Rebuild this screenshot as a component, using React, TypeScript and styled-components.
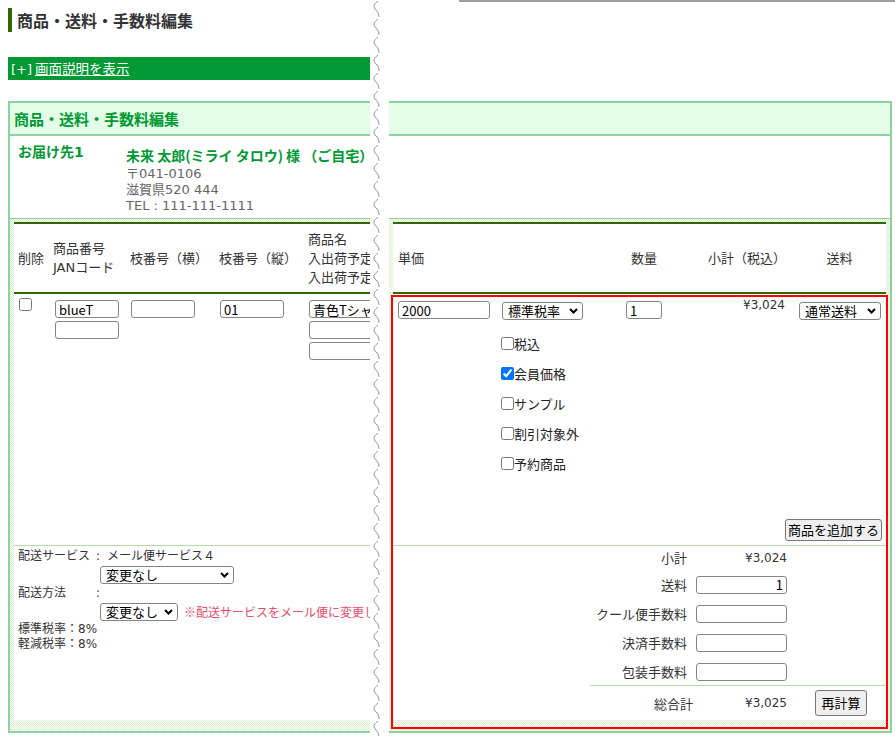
import { FC, ReactNode } from 'react';
import styled, { createGlobalStyle } from 'styled-components';

const GREEN = '#009933';
const DARK = '#336600';
const PANEL = '#8dd1a1';
const SOFT = '#b5dca5';
const HATCH = 'repeating-conic-gradient(#d6efc6 0% 25%, #ffffff 0% 50%) 0 0 / 2px 2px';
const UI_FONT = '"Noto Sans CJK JP", "Noto Sans", sans-serif';

const GlobalStyle = createGlobalStyle`
  html, body {
    margin: 0;
    padding: 0;
    background: #fff;
  }
  body {
    font-family: "DejaVu Sans", "Noto Sans CJK JP", sans-serif;
    font-size: 13px;
    color: #333;
  }
`;

const Page = styled.div`
  display: flex;
  width: 895px;
  height: 736px;
  overflow: hidden;
  background: #fff;
`;

const Side = styled.div<{ $w: number }>`
  flex: 0 0 ${(p) => p.$w}px;
  min-width: 0;
  overflow: hidden;
`;

const Tear = styled.div`
  flex: 0 0 18px;
  display: flex;
  padding-left: 1px;
`;

const Title = styled.h1`
  margin: 8px 0 0 8px;
  height: 24px;
  line-height: 24px;
  padding-left: 5px;
  border-left: 4px solid ${DARK};
  font-family: ${UI_FONT};
  font-size: 16px;
  font-weight: bold;
  color: #333;
  white-space: nowrap;
`;

const HelpBar = styled.div`
  margin: 25px 0 0 8px;
  height: 23px;
  line-height: 23px;
  padding-left: 3px;
  background: ${GREEN};
  color: #fff;
  font-size: 13px;
  white-space: nowrap;

  a {
    color: #fff;
    text-decoration: underline;
    margin-left: 3px;
    font-family: ${UI_FONT};
    font-size: 13.5px;
  }
`;

const TopRule = styled.div`
  margin-left: 70px;
  height: 2px;
  background: #9e9e9e;
`;

const Panel = styled.section<{ $side: 'left' | 'right'; $top: number }>`
  margin-top: ${(p) => p.$top}px;
  margin-left: ${(p) => (p.$side === 'left' ? 8 : 0)}px;
  width: ${(p) => (p.$side === 'left' ? 420 : 501)}px;
  border: 2px solid ${PANEL};
  border-${(p) => (p.$side === 'left' ? 'right' : 'left')}: none;
`;

const PanelHeader = styled.h2`
  margin: 0;
  height: 31px;
  line-height: 31px;
  padding-left: 4px;
  background: #e3fde6;
  border-bottom: 2px solid ${PANEL};
  color: ${GREEN};
  font-family: ${UI_FONT};
  font-size: 15px;
  font-weight: bold;
  white-space: nowrap;
`;

const Address = styled.div`
  box-sizing: border-box;
  height: 83px;
  border-bottom: 1px solid ${PANEL};
  display: grid;
  grid-template-columns: 116px 1fr;
  padding-top: 7px;
`;

const DestLabel = styled.div`
  padding-left: 8px;
  font-size: 14px;
  font-weight: bold;
  line-height: 18px;
  color: ${GREEN};
`;

const DestName = styled.div`
  margin: 3px 0 2px;
  font-family: ${UI_FONT};
  font-size: 14px;
  font-weight: bold;
  line-height: 18px;
  color: ${GREEN};
  white-space: nowrap;
`;

const DestLine = styled.div`
  font-size: 13px;
  line-height: 16px;
  color: #666;
`;

const TableArea = styled.div<{ $side: 'left' | 'right' }>`
  background: ${HATCH};
  padding: 3px ${(p) => (p.$side === 'right' ? 4 : 0)}px 11px 4px;
`;

const HeadRow = styled.div<{ $cols: string }>`
  display: grid;
  grid-template-columns: ${(p) => p.$cols};
  height: 68px;
  background: #fff;
  border-top: 2px solid ${DARK};
  border-bottom: 2px solid ${DARK};
`;

const HeadCell = styled.div<{ $pl?: number; $center?: boolean }>`
  display: flex;
  align-items: center;
  justify-content: ${(p) => (p.$center ? 'center' : 'flex-start')};
  padding-left: ${(p) => p.$pl ?? 0}px;
  font-size: 13px;
  line-height: 19px;
  color: #333;
  white-space: nowrap;
`;

const DataRow = styled.div`
  display: flex;
  flex-direction: column;
  height: 251px;
  background: #fff;
  border-bottom: 1px solid ${SOFT};
`;

const DataGrid = styled.div<{ $cols: string }>`
  flex: 1;
  display: grid;
  grid-template-columns: ${(p) => p.$cols};
  align-items: start;
`;

const DataCell = styled.div<{ $pl?: number; $pt?: number; $pr?: number; $right?: boolean }>`
  padding: ${(p) => p.$pt ?? 6}px ${(p) => p.$pr ?? 0}px 0 ${(p) => p.$pl ?? 4}px;
  text-align: ${(p) => (p.$right ? 'right' : 'left')};
  white-space: nowrap;
`;

const Stack = styled.div`
  display: flex;
  flex-direction: column;
  gap: 3px;
`;

const Field = styled.input<{ $w: number; $align?: string }>`
  display: block;
  box-sizing: border-box;
  width: ${(p) => p.$w}px;
  height: 18px;
  margin: 0;
  padding: 0 3px;
  border: 1px solid #858585;
  border-radius: 3px;
  background: #fff;
  color: #000;
  font-family: ${UI_FONT};
  font-size: 13px;
  text-align: ${(p) => p.$align ?? 'left'};
  outline: none;
`;

const Check = styled.input.attrs({ type: 'checkbox' })`
  width: 13px;
  height: 13px;
  margin: 0;
  flex: none;
`;

const SelectWrap = styled.span<{ $w: number }>`
  position: relative;
  display: inline-block;
  flex: none;
  width: ${(p) => p.$w}px;
  height: 18px;
  vertical-align: top;
`;

const Select = styled.select`
  appearance: none;
  box-sizing: border-box;
  width: 100%;
  height: 18px;
  margin: 0;
  padding: 0 16px 0 5px;
  border: 1px solid #858585;
  border-radius: 3px;
  background: #fff;
  color: #000;
  font-family: ${UI_FONT};
  font-size: 13px;
  line-height: 16px;
`;

const Chevron = styled.svg`
  position: absolute;
  right: 5px;
  top: 6px;
  pointer-events: none;
`;

const Dropdown: FC<{ w: number; value: string }> = ({ w, value }) => (
  <SelectWrap $w={w}>
    <Select defaultValue={value}>
      <option>{value}</option>
    </Select>
    <Chevron width="9" height="6" viewBox="0 0 9 6">
      <path d="M1 1 L4.5 4.5 L8 1" fill="none" stroke="#000" strokeWidth="2" />
    </Chevron>
  </SelectWrap>
);

const Options = styled.div`
  display: flex;
  flex-direction: column;
  gap: 17px;
  margin-top: 17px;
  margin-left: -1px;
`;

const Option = styled.label`
  display: flex;
  align-items: center;
  height: 13px;
  font-family: ${UI_FONT};
  font-size: 13px;
  color: #222;
`;

const Amount = styled.div`
  font-size: 12px;
  line-height: 16px;
  color: #333;
`;

const ButtonRow = styled.div`
  display: flex;
  justify-content: flex-end;
  padding: 0 4px 4px 0;
`;

const Button = styled.button<{ $pad: string }>`
  font-family: ${UI_FONT};
  font-size: 13px;
  line-height: 18px;
  color: #000;
  background: #efefef;
  border: 1px solid #767676;
  border-radius: 3px;
  padding: ${(p) => p.$pad};
  white-space: nowrap;
`;

const FootRow = styled.div`
  height: 174px;
  background: #fff;
  display: flex;
`;

const ShipInfo = styled.div`
  padding: 2px 0 0 4px;
  font-size: 12px;
  line-height: 16px;
  color: #333;
  white-space: nowrap;
`;

const InfoLine = styled.div`
  display: flex;
  height: 16px;
`;

const InfoLabel = styled.span`
  width: 78px;
`;

const Colon = styled.span`
  width: 11px;
  font-family: "DejaVu Sans", sans-serif;
`;

const Indented = styled.div`
  display: flex;
  align-items: center;
  gap: 6px;
  height: 18px;
  margin: 2px 0 1px 82px;
`;

const Note = styled.span`
  color: #ec4a6a;
  font-family: ${UI_FONT};
  font-size: 12px;
`;

const Rate = styled.div`
  line-height: 15px;
`;

const Highlight = styled.div`
  position: relative;

  &::after {
    content: '';
    position: absolute;
    top: 1px;
    left: -2px;
    right: -2px;
    bottom: -9px;
    border: 2px solid #ff0000;
    pointer-events: none;
  }
`;

const Summary = styled.div`
  margin-left: auto;
  width: 296px;
  padding-top: 2px;
  display: flex;
  flex-direction: column;
`;

const SumRow = styled.div<{ $gap?: number }>`
  display: grid;
  grid-template-columns: 97px 91px 1fr;
  column-gap: 9px;
  align-items: center;
  height: 18px;
  margin-bottom: ${(p) => p.$gap ?? 11}px;
  font-size: 13px;
  color: #333;
`;

const SumLabel = styled.span<{ $shift?: number }>`
  text-align: right;
  white-space: nowrap;
  margin-right: ${(p) => -(p.$shift ?? 0)}px;
`;

const SumValue = styled.span`
  text-align: right;
  font-size: 12px;
`;

const TotalRow = styled(SumRow)`
  height: auto;
  flex: 1;
  margin: 0;
  border-top: 1px solid ${SOFT};

  button {
    justify-self: center;
  }
`;

const TearLine: FC = () => {
  let d = '';
  for (let y = 0; y < 740; y += 18) {
    d += `M7 ${y + 1} C2 ${y + 5} 2 ${y + 7} 5 ${y + 10} C7 ${y + 12} 8 ${y + 14} 8 ${y + 17} `;
  }
  return (
    <svg width="12" height="736" viewBox="0 0 12 736">
      <path d={d} fill="none" stroke="#8a93a8" strokeWidth="1" />
    </svg>
  );
};

const LEFT_COLS = '37px 76px 89px 89px 1fr';
const RIGHT_COLS = '104px 124px 80px 92px 1fr';

const Lines: FC<{ items: ReactNode[] }> = ({ items }) => (
  <div>
    {items.map((t, i) => (
      <div key={i}>{t}</div>
    ))}
  </div>
);

const App: FC = () => (
  <Page>
    <GlobalStyle />
    <Side $w={370}>
      <Title>商品・送料・手数料編集</Title>
      <HelpBar>
        [+]<a href="#">画面説明を表示</a>
      </HelpBar>
      <Panel $side="left" $top={21}>
        <PanelHeader>商品・送料・手数料編集</PanelHeader>
        <Address>
          <DestLabel>お届け先1</DestLabel>
          <div>
            <DestName>未来 太郎(ミライ タロウ) 様 （ご自宅）</DestName>
            <DestLine>〒041-0106</DestLine>
            <DestLine>滋賀県520 444</DestLine>
            <DestLine>TEL : 111-111-1111</DestLine>
          </div>
        </Address>
        <TableArea $side="left">
          <HeadRow $cols={LEFT_COLS}>
            <HeadCell $pl={4}>削除</HeadCell>
            <HeadCell $pl={2}>
              <Lines items={['商品番号', 'JANコード']} />
            </HeadCell>
            <HeadCell $pl={3}>枝番号（横）</HeadCell>
            <HeadCell $pl={3}>枝番号（縦）</HeadCell>
            <HeadCell $pl={3}>
              <Lines items={['商品名', '入出荷予定日', '入出荷予定数']} />
            </HeadCell>
          </HeadRow>
          <DataRow>
            <DataGrid $cols={LEFT_COLS}>
              <DataCell $pl={5} $pt={4}>
                <Check />
              </DataCell>
              <DataCell>
                <Stack>
                  <Field $w={64} defaultValue="blueT" />
                  <Field $w={64} />
                </Stack>
              </DataCell>
              <DataCell>
                <Field $w={64} />
              </DataCell>
              <DataCell>
                <Field $w={64} defaultValue="01" />
              </DataCell>
              <DataCell>
                <Stack>
                  <Field $w={150} defaultValue="青色Tシャツ" />
                  <Field $w={150} />
                  <Field $w={150} />
                </Stack>
              </DataCell>
            </DataGrid>
          </DataRow>
          <FootRow>
            <ShipInfo>
              <InfoLine>
                <InfoLabel>配送サービス</InfoLabel>
                <Colon>:</Colon>
                <span>メール便サービス４</span>
              </InfoLine>
              <Indented>
                <Dropdown w={134} value="変更なし" />
              </Indented>
              <InfoLine>
                <InfoLabel>配送方法</InfoLabel>
                <Colon>:</Colon>
              </InfoLine>
              <Indented>
                <Dropdown w={78} value="変更なし" />
                <Note>※配送サービスをメール便に変更した場合は配送方法を選択してください</Note>
              </Indented>
              <Rate>標準税率：8%</Rate>
              <Rate>軽減税率：8%</Rate>
            </ShipInfo>
          </FootRow>
        </TableArea>
      </Panel>
    </Side>

    <Tear>
      <TearLine />
    </Tear>

    <Side $w={507}>
      <TopRule />
      <Panel $side="right" $top={99}>
        <PanelHeader />
        <Address />
        <TableArea $side="right">
          <HeadRow $cols={RIGHT_COLS}>
            <HeadCell $pl={5}>単価</HeadCell>
            <HeadCell />
            <HeadCell $pl={10}>数量</HeadCell>
            <HeadCell $pl={7}>小計（税込）</HeadCell>
            <HeadCell $center>送料</HeadCell>
          </HeadRow>
          <Highlight>
            <DataRow>
              <DataGrid $cols={RIGHT_COLS}>
                <DataCell $pl={5} $pt={7}>
                  <Field $w={92} defaultValue="2000" />
                </DataCell>
                <DataCell $pl={5} $pt={8}>
                  <Dropdown w={81} value="標準税率" />
                  <Options>
                    <Option>
                      <Check />税込
                    </Option>
                    <Option>
                      <Check defaultChecked />会員価格
                    </Option>
                    <Option>
                      <Check />サンプル
                    </Option>
                    <Option>
                      <Check />割引対象外
                    </Option>
                    <Option>
                      <Check />予約商品
                    </Option>
                  </Options>
                </DataCell>
                <DataCell $pl={5} $pt={7}>
                  <Field $w={36} defaultValue="1" />
                </DataCell>
                <DataCell $right $pt={3} $pr={8}>
                  <Amount>¥3,024</Amount>
                </DataCell>
                <DataCell $pl={6} $pt={8}>
                  <Dropdown w={82} value="通常送料" />
                </DataCell>
              </DataGrid>
              <ButtonRow>
                <Button $pad="1px 2px">商品を追加する</Button>
              </ButtonRow>
            </DataRow>
            <FootRow>
              <Summary>
                <SumRow $gap={9}>
                  <SumLabel>小計</SumLabel>
                  <SumValue>¥3,024</SumValue>
                </SumRow>
                <SumRow>
                  <SumLabel>送料</SumLabel>
                  <Field $w={91} $align="right" defaultValue="1" />
                </SumRow>
                <SumRow>
                  <SumLabel>クール便手数料</SumLabel>
                  <Field $w={91} />
                </SumRow>
                <SumRow>
                  <SumLabel>決済手数料</SumLabel>
                  <Field $w={91} />
                </SumRow>
                <SumRow $gap={5}>
                  <SumLabel>包装手数料</SumLabel>
                  <Field $w={91} />
                </SumRow>
                <TotalRow>
                  <SumLabel $shift={6}>総合計</SumLabel>
                  <SumValue>¥3,025</SumValue>
                  <Button $pad="3px 5px">再計算</Button>
                </TotalRow>
              </Summary>
            </FootRow>
          </Highlight>
        </TableArea>
      </Panel>
    </Side>
  </Page>
);

export default App;
